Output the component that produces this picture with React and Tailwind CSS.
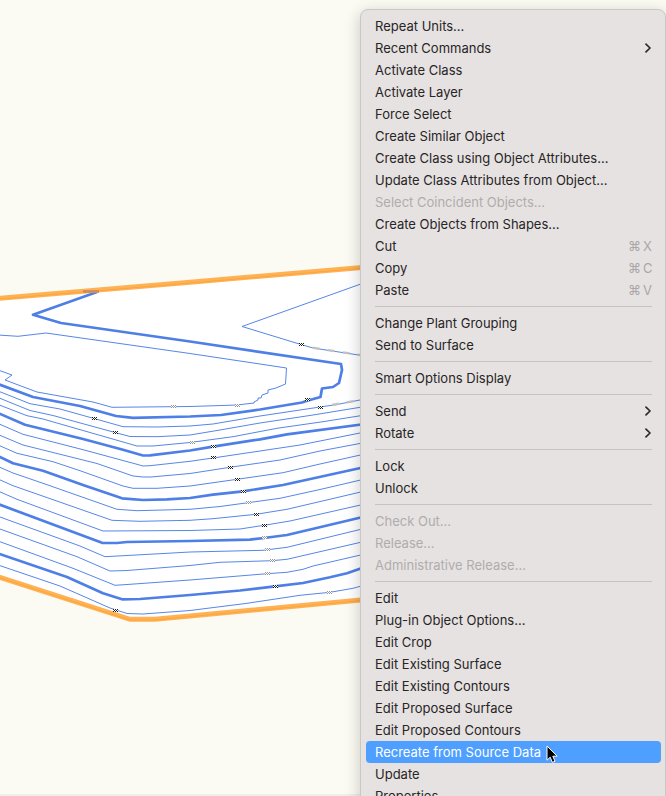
import React, { useState } from "react";
import clsx from "clsx";

const MENU_GROUPS = [
  [
    { label: "Repeat Units..." },
    { label: "Recent Commands", submenu: true },
    { label: "Activate Class" },
    { label: "Activate Layer" },
    { label: "Force Select" },
    { label: "Create Similar Object" },
    { label: "Create Class using Object Attributes..." },
    { label: "Update Class Attributes from Object..." },
    { label: "Select Coincident Objects...", disabled: true },
    { label: "Create Objects from Shapes..." },
    { label: "Cut", shortcut: "X" },
    { label: "Copy", shortcut: "C" },
    { label: "Paste", shortcut: "V" },
  ],
  [{ label: "Change Plant Grouping" }, { label: "Send to Surface" }],
  [{ label: "Smart Options Display" }],
  [
    { label: "Send", submenu: true },
    { label: "Rotate", submenu: true },
  ],
  [{ label: "Lock" }, { label: "Unlock" }],
  [
    { label: "Check Out...", disabled: true },
    { label: "Release...", disabled: true },
    { label: "Administrative Release...", disabled: true },
  ],
  [
    { label: "Edit" },
    { label: "Plug-in Object Options..." },
    { label: "Edit Crop" },
    { label: "Edit Existing Surface" },
    { label: "Edit Existing Contours" },
    { label: "Edit Proposed Surface" },
    { label: "Edit Proposed Contours" },
    { label: "Recreate from Source Data" },
    { label: "Update" },
    { label: "Properties..." },
  ],
];

// every fifth contour is an index contour and gets the heavier pen
const INDEX_CONTOURS = [
  "97,292 33,314.7 61,323 190,341.5 341,364 342,370 339,383 333,387 322,388.5 320.5,397 308,400.5 302,402.5 260,409.5 221,415 190,416.5 133,417.8 116,416 80,406 33,397 -2,384",
  "-2,413 25,424.7 83,439 123,449.7 143,455.5 150,455.3 190,450.5 213,446.7 260,439.3 287,434.3 365,424",
  "-2,456 13,463.3 43,470.7 83,485 122,498.3 143,500 167,499.3 190,498 213,494.7 243,491.3 283,485 365,467",
  "-2,504 102,542.8 117,543 127,542 190,541 250,539.7 264,538 287,535 365,516.5",
  "-2,553.5 67,577 103,593.3 122,599.3 140,599 190,595 240,590.5 275,586.3 303,583 330,577.3 347,573.3 365,567",
];

const CONTOURS = [
  "-2,335 18,336.3 46,333 190,353.5 286.5,368 285.5,384 276,388 268,390 268,393 262,395 261,398 258,398 258,400 254,402 254,403 237,405 190,406.5 112,407.3 93,402 37,392 5,380 12,375 -2,370",
  "365,282.5 242,326.5 301,344.5 313,348 365,356",
  "-2,391 30,403.7 60,409 94,418.5 123,426.7 157,427 190,426 213,424 260,416 320,407 337,404.5 365,399",
  "-2,397.5 30,410.5 53,415.5 115,432.5 130,436.5 157,436.7 190,435 220,430 260,423 313,415 365,406.5",
  "-2,404.5 27,415.7 43,419 137,446 153,446 190,442.5 233,436.7 277,428.3 323,421.7 365,415",
  "-2,423.5 23,434.3 83,449.7 137,464.3 143,466 150,465.7 190,461.3 213,458 270,449.5 300,445 365,432",
  "-2,434.5 23,445 97,463.5 133,476 143,477 151,477 190,473.5 230,467.3 280,460 320,451 365,442.5",
  "-2,445 17,453.3 53,461.7 80,470.7 123,486 133,488.3 157,488.3 190,486 237,479.3 283,472.7 320,464 365,454",
  "-2,466.5 13,473 43,483.3 117,509.3 137,510.7 190,509.3 220,506.5 248,502.7 280,498.3 320,489.5 365,479",
  "-2,479 13,485.7 112,520.3 140,521.3 190,520.3 213,518.7 256,514.3 287,509.3 365,491",
  "-2,491 17,499.3 103,531 190,530.5 240,529 264,525.3 290,521 365,504",
  "-2,516.3 80,546 105,556.7 160,553.7 190,552 263,550.3 287,547.3 365,528.3",
  "-2,528.3 77,556.7 110,571 127,570.5 190,565.5 220,562.3 272,560.7 287,559.3 365,541.3",
  "-2,541 73,568.3 115,585.3 130,584.3 190,580 267,573.7 287,572.3 303,569.3 313,566 365,554",
  "-2,565 60,586 110,608 127,613.5 143,614 190,610.5 247,603.3 300,595.3 330,592.3 353,588.3 365,585",
];

const LABEL_MARKS = [
  [301, 344],
  [307, 399],
  [320, 407],
  [94, 418],
  [115, 432],
  [213, 446],
  [213, 457],
  [230, 467],
  [237, 479],
  [243, 491],
  [256, 514],
  [264, 525],
  [275, 586],
  [115, 610],
];

const FAINT_MARKS = [
  [173, 406],
  [237, 405],
  [192, 442],
  [248, 502],
  [264, 537],
  [267, 549],
  [272, 560],
  [267, 573],
  [329, 592],
];

// unreadably small contour label, shows up as a little checker pattern
const Mark = ({ x, y, color }) => (
  <g shapeRendering="crispEdges">
    <rect x={x - 2} y={y - 1} width="5" height="3" fill="#ffffff" />
    <path
      d={`M${x - 2} ${y - 1}h1v1h-1zm2 0h1v1h-1zm2 0h1v1h-1zm-3 1h1v1h-1zm2 0h1v1h-1zm-3 1h1v1h-1zm2 0h1v1h-1zm2 0h1v1h-1z`}
      fill={color}
    />
  </g>
);

const SiteModel = () => (
  <svg
    viewBox="0 0 666 794"
    preserveAspectRatio="xMinYMin slice"
    className="block min-h-0 w-full flex-1"
    role="img"
    aria-label="Site model contours"
  >
    <polygon
      points="-4,298.6 361,267.5 400,264 400,597 361,600 190,616 155,619.5 130,619.5 -4,576"
      fill="#ffffff"
    />
    <g fill="none" stroke="#4d7fe6" strokeLinejoin="round">
      {CONTOURS.map((points) => (
        <polyline key={points} points={points} strokeWidth="0.95" />
      ))}
      {INDEX_CONTOURS.map((points) => (
        <polyline key={points} points={points} strokeWidth="2.7" />
      ))}
    </g>
    <g fill="none" stroke="#c2c2c4" strokeWidth="2.4" strokeDasharray="7 8">
      <path d="M313 347.8L365 355.8" />
      <path d="M332 405L365 399" />
    </g>
    <g fill="none" stroke="#ffb254" strokeWidth="5">
      <path d="M-4 298.6L190 282.3L400 264.2" />
      <path d="M-4 576L130 619.3L155 619.3L190 616L361 600L400 596.5" />
    </g>
    <g fill="none" stroke="#fba53d" strokeWidth="1">
      <path d="M-4 299.3L190 283L400 265" />
      <path d="M-4 576.6L130 620L155 620L190 616.6L361 600.6" />
    </g>
    <path d="M83 291.5H99" stroke="#cb8b5d" strokeWidth="2.6" />
    {LABEL_MARKS.map(([x, y]) => (
      <Mark key={`${x}-${y}`} x={x} y={y} color="#1c1c1c" />
    ))}
    {FAINT_MARKS.map(([x, y]) => (
      <Mark key={`${x}-${y}`} x={x} y={y} color="#959595" />
    ))}
  </svg>
);

const Chevron = () => (
  <svg viewBox="0 0 8 10" className="h-[10px] w-2" aria-hidden="true">
    <path
      d="M2 1.2L6 5L2 8.8"
      fill="none"
      stroke="#2b292a"
      strokeWidth="1.7"
      strokeLinecap="round"
      strokeLinejoin="round"
    />
  </svg>
);

const Pointer = () => (
  <svg
    viewBox="0 0 12 19"
    className="pointer-events-none absolute top-1 left-[180px] h-[19px] w-3"
    aria-hidden="true"
  >
    <path
      d="M1 1V15.2L4.2 12.2L6.4 17.4L9 16.3L6.8 11.2H11.2Z"
      fill="#000000"
      stroke="#ffffff"
      strokeWidth="1"
      strokeLinejoin="round"
    />
  </svg>
);

const MenuItem = ({ item, active, onHover }) => (
  <li role="none" className="relative">
    <button
      type="button"
      role="menuitem"
      disabled={item.disabled}
      onMouseEnter={onHover}
      className={clsx(
        "flex h-[22px] w-full items-center justify-between rounded px-[9px] text-left whitespace-nowrap",
        active && "bg-[#4e9fff] text-white",
        !active && (item.disabled ? "text-[#b0acad]" : "text-[#272526]")
      )}
    >
      <span>{item.label}</span>
      {item.submenu && <Chevron />}
      {item.shortcut && (
        <span className="flex gap-0.5 text-[#aaa6a7]">
          <span>⌘</span>
          <span className="w-[9px]">{item.shortcut}</span>
        </span>
      )}
    </button>
    {active && <Pointer />}
  </li>
);

const ContextMenu = () => {
  const [active, setActive] = useState("Recreate from Source Data");

  return (
    <div
      role="menu"
      className="absolute top-[9px] right-0 w-[306px] rounded-lg border border-[#c9c8c3] bg-[#e6e2e1] py-[5px] pr-1 pl-[5px] shadow-[0_4px_16px_rgba(0,0,0,0.22)]"
    >
      {MENU_GROUPS.map((group, index) => (
        <React.Fragment key={index}>
          {index > 0 && <hr className="mx-[9px] my-[5px] border-[#c6c2c2]" />}
          <ul role="none">
            {group.map((item) => (
              <MenuItem
                key={item.label}
                item={item}
                active={item.label === active}
                onHover={() => setActive(item.label)}
              />
            ))}
          </ul>
        </React.Fragment>
      ))}
    </div>
  );
};

const App = () => {
  return (
    <div className="relative flex h-screen flex-col overflow-hidden bg-[#fcfbf3] font-['Inter',sans-serif] text-[13px] leading-4">
      <SiteModel />
      <div className="h-0.5 bg-[#f2edeb]" />
      <ContextMenu />
    </div>
  );
};

export default App;
